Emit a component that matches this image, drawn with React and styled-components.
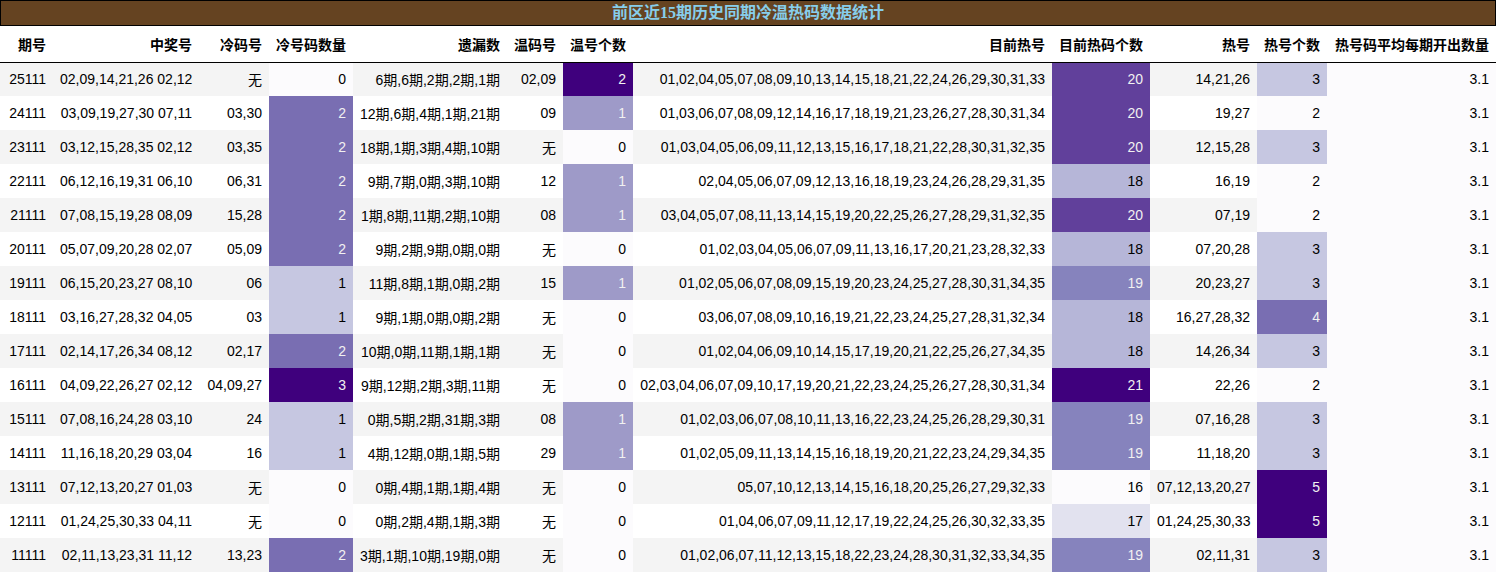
import React from "react";
import styled, { createGlobalStyle } from "styled-components";

const GlobalStyle = createGlobalStyle`
  html, body { margin: 0; padding: 0; background: #ffffff; }
  body { font-family: "Liberation Sans", Arial, "Noto Sans CJK SC", sans-serif; }
`;

const PURPLES = [
  [252, 251, 253],
  [239, 237, 245],
  [218, 218, 235],
  [188, 189, 220],
  [158, 154, 200],
  [128, 125, 186],
  [106, 81, 163],
  [84, 39, 143],
  [63, 0, 125],
];

function purples(t) {
  const x = Math.max(0, Math.min(1, t)) * (PURPLES.length - 1);
  const i = Math.min(Math.floor(x), PURPLES.length - 2);
  const f = x - i;
  const a = PURPLES[i];
  const b = PURPLES[i + 1];
  return a.map((v, k) => v + (b[k] - v) * f);
}

function lum(rgb) {
  const lin = rgb.map((c) => {
    const s = c / 255;
    return s <= 0.03928 ? s / 12.92 : Math.pow((s + 0.055) / 1.055, 2.4);
  });
  return 0.2126 * lin[0] + 0.7152 * lin[1] + 0.0722 * lin[2];
}

const columns = [
  { title: "期号", width: 53 },
  { title: "中奖号", width: 146 },
  { title: "冷码号", width: 70 },
  { title: "冷号码数量", width: 84, grad: true },
  { title: "遗漏数", width: 154 },
  { title: "温码号", width: 56 },
  { title: "温号个数", width: 70, grad: true },
  { title: "目前热号", width: 419 },
  { title: "目前热码个数", width: 98, grad: true },
  { title: "热号", width: 107 },
  { title: "热号个数", width: 70, grad: true },
  { title: "热号码平均每期开出数量", width: 169, grad: true },
];

const rows = [
  ["25111", "02,09,14,21,26 02,12", "无", 0, "6期,6期,2期,2期,1期", "02,09", 2, "01,02,04,05,07,08,09,10,13,14,15,18,21,22,24,26,29,30,31,33", 20, "14,21,26", 3, 3.1],
  ["24111", "03,09,19,27,30 07,11", "03,30", 2, "12期,6期,4期,1期,21期", "09", 1, "01,03,06,07,08,09,12,14,16,17,18,19,21,23,26,27,28,30,31,34", 20, "19,27", 2, 3.1],
  ["23111", "03,12,15,28,35 02,12", "03,35", 2, "18期,1期,3期,4期,10期", "无", 0, "01,03,04,05,06,09,11,12,13,15,16,17,18,21,22,28,30,31,32,35", 20, "12,15,28", 3, 3.1],
  ["22111", "06,12,16,19,31 06,10", "06,31", 2, "9期,7期,0期,3期,10期", "12", 1, "02,04,05,06,07,09,12,13,16,18,19,23,24,26,28,29,31,35", 18, "16,19", 2, 3.1],
  ["21111", "07,08,15,19,28 08,09", "15,28", 2, "1期,8期,11期,2期,10期", "08", 1, "03,04,05,07,08,11,13,14,15,19,20,22,25,26,27,28,29,31,32,35", 20, "07,19", 2, 3.1],
  ["20111", "05,07,09,20,28 02,07", "05,09", 2, "9期,2期,9期,0期,0期", "无", 0, "01,02,03,04,05,06,07,09,11,13,16,17,20,21,23,28,32,33", 18, "07,20,28", 3, 3.1],
  ["19111", "06,15,20,23,27 08,10", "06", 1, "11期,8期,1期,0期,2期", "15", 1, "01,02,05,06,07,08,09,15,19,20,23,24,25,27,28,30,31,34,35", 19, "20,23,27", 3, 3.1],
  ["18111", "03,16,27,28,32 04,05", "03", 1, "9期,1期,0期,0期,2期", "无", 0, "03,06,07,08,09,10,16,19,21,22,23,24,25,27,28,31,32,34", 18, "16,27,28,32", 4, 3.1],
  ["17111", "02,14,17,26,34 08,12", "02,17", 2, "10期,0期,11期,1期,1期", "无", 0, "01,02,04,06,09,10,14,15,17,19,20,21,22,25,26,27,34,35", 18, "14,26,34", 3, 3.1],
  ["16111", "04,09,22,26,27 02,12", "04,09,27", 3, "9期,12期,2期,3期,11期", "无", 0, "02,03,04,06,07,09,10,17,19,20,21,22,23,24,25,26,27,28,30,31,34", 21, "22,26", 2, 3.1],
  ["15111", "07,08,16,24,28 03,10", "24", 1, "0期,5期,2期,31期,3期", "08", 1, "01,02,03,06,07,08,10,11,13,16,22,23,24,25,26,28,29,30,31", 19, "07,16,28", 3, 3.1],
  ["14111", "11,16,18,20,29 03,04", "16", 1, "4期,12期,0期,1期,5期", "29", 1, "01,02,05,09,11,13,14,15,16,18,19,20,21,22,23,24,29,34,35", 19, "11,18,20", 3, 3.1],
  ["13111", "07,12,13,20,27 01,03", "无", 0, "0期,4期,1期,1期,4期", "无", 0, "05,07,10,12,13,14,15,16,18,20,25,26,27,29,32,33", 16, "07,12,13,20,27", 5, 3.1],
  ["12111", "01,24,25,30,33 04,11", "无", 0, "0期,2期,4期,1期,3期", "无", 0, "01,04,06,07,09,11,12,17,19,22,24,25,26,30,32,33,35", 17, "01,24,25,30,33", 5, 3.1],
  ["11111", "02,11,13,23,31 11,12", "13,23", 2, "3期,1期,10期,19期,0期", "无", 0, "01,02,06,07,11,12,13,15,18,22,23,24,28,30,31,32,33,34,35", 19, "02,11,31", 3, 3.1],
];

const ranges = columns.map((c, ci) => {
  if (!c.grad) return null;
  const vals = rows.map((r) => r[ci]);
  return [Math.min(...vals), Math.max(...vals)];
});

function cellColors(ci, v) {
  const r = ranges[ci];
  if (!r) return null;
  const [lo, hi] = r;
  const t = hi > lo ? (v - lo) / (hi - lo) : 0;
  const rgb = purples(t);
  const bg = `rgb(${rgb.map((c) => Math.round(c)).join(",")})`;
  const fg = lum(rgb) < 0.408 ? "#f1f1f1" : "#000000";
  return { bg, fg };
}

const Table = styled.table`
  border-collapse: collapse;
  table-layout: fixed;
  width: 1496px;
  font-size: 14px;
  color: #000;
`;

const Caption = styled.caption`
  caption-side: top;
  height: 24px;
  line-height: 24px;
  background: #654321;
  border: 1px solid #000;
  color: #87ceeb;
  font-family: "Liberation Serif", "Noto Sans CJK SC", serif;
  font-weight: bold;
  font-size: 16px;
  text-align: center;
`;

const HeadRow = styled.tr`
  height: 36px;
  border-bottom: 1px solid #000;
  background: #ffffff;
`;

const HeadCell = styled.th`
  padding: 0 7px;
  text-align: right;
  font-weight: bold;
  white-space: nowrap;
  font-family: "Liberation Sans", "Noto Sans CJK SC", sans-serif;
  color: #000;
`;

const BodyRow = styled.tr`
  height: 34px;
  background: ${(p) => (p.$odd ? "#f4f4f4" : "#ffffff")};
`;

const Cell = styled.td`
  padding: 0 7px;
  text-align: right;
  white-space: nowrap;
  vertical-align: middle;
  background: ${(p) => p.$bg || "transparent"};
  color: ${(p) => p.$fg || "#000"};
`;

export default function App() {
  return (
    <>
      <GlobalStyle />
      <Table>
        <Caption>前区近15期历史同期冷温热码数据统计</Caption>
        <colgroup>
          {columns.map((c, i) => (
            <col key={i} style={{ width: c.width }} />
          ))}
        </colgroup>
        <thead>
          <HeadRow>
            {columns.map((c, i) => (
              <HeadCell key={i}>{c.title}</HeadCell>
            ))}
          </HeadRow>
        </thead>
        <tbody>
          {rows.map((r, ri) => (
            <BodyRow key={ri} $odd={ri % 2 === 0}>
              {r.map((v, ci) => {
                const col = cellColors(ci, v);
                return (
                  <Cell key={ci} $bg={col && col.bg} $fg={col && col.fg}>
                    {typeof v === "number" && ci === 11 ? v.toFixed(1) : v}
                  </Cell>
                );
              })}
            </BodyRow>
          ))}
        </tbody>
      </Table>
    </>
  );
}
